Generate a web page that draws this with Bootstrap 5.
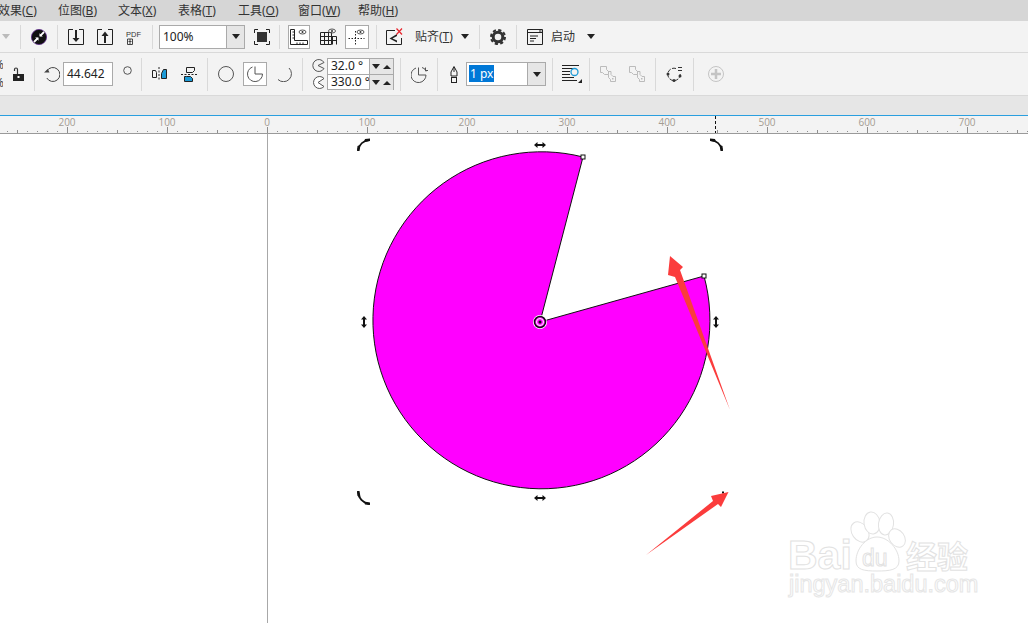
<!DOCTYPE html>
<html lang="zh-CN">
<head>
    <meta charset="UTF-8">
    <meta name="viewport" content="width=device-width, initial-scale=1.0">
    <title>CorelDRAW</title>
    <link href="https://cdn.jsdelivr.net/npm/bootstrap@5.3.3/dist/css/bootstrap.min.css" rel="stylesheet">
    <script src="https://cdn.jsdelivr.net/npm/bootstrap@5.3.3/dist/js/bootstrap.bundle.min.js"></script>
    <style>
        html, body { height: 100%; overflow: hidden; background: #fff; }
        body { font-family: "Noto Sans", "Noto Sans CJK SC", sans-serif; font-size: 12px; color: #333; }
        svg { display: block; flex: none; }

        .menu-bar { height: 21px; background: #d6d6d6; overflow: hidden; }
        .menu-bar span { flex: none; width: 60px; white-space: nowrap; line-height: 21px; }
        .menu-bar span:first-child { margin-left: -2px; }
        .menu-bar u { text-underline-offset: 1px; }

        .tool-row { background: #f3f3f3; border-bottom: 1px solid #d9d9d9; }
        .row-one { height: 32px; }
        .row-two { height: 43px; }
        .band { height: 20px; background: #e6e6e6; border-bottom: 1px solid #2a9fdf; }
        .sep { flex: none; width: 1px; background: #d9d9d9; }
        .row-one .sep { height: 24px; }
        .row-two .sep { height: 33px; }
        .caret-down { flex: none; width: 0; height: 0; border: 4px solid transparent; border-top: 5px solid #222; border-bottom: 0; }
        .caret-off { border-top-color: #bbb; }
        .caret-up { flex: none; width: 0; height: 0; border: 4px solid transparent; border-bottom: 4px solid #222; border-top: 0; }
        .tool-label { flex: none; white-space: nowrap; line-height: 16px; }
        .toggled { flex: none; height: 24px; background: #fff; border: 1px solid #aaa; }

        .field { flex: none; height: 24px; background: #fff; border: 1px solid #aaa; color: #222; }
        .field-text { flex: 1; padding-left: 3px; line-height: 22px; white-space: nowrap; }
        .field-btn { flex: none; width: 18px; background: #e6e6e6; border-left: 1px solid #aaa; }
        .w-zoom { width: 86px; }
        .w-angle { width: 50px; }
        .w-pen { width: 80px; }
        .w-toggle-a { width: 22px; }
        .w-toggle-b { width: 24px; }
        .selected-text { background: #0078d7; color: #fff; padding: 0 1px; margin-left: -1px; }

        .spin-box { flex: none; width: 67px; height: 32px; background: #fff; border: 1px solid #aaa; color: #222; }
        .spin-row { height: 15px; }
        .spin-row + .spin-row { border-top: 1px solid #aaa; height: 16px; }
        .spin-val { width: 41px; padding-left: 3px; line-height: 14px; white-space: nowrap; }
        .spin-btns { flex: 1; background: #e6e6e6; border-left: 1px solid #aaa; }
        .pct { flex: none; width: 3px; overflow: hidden; line-height: 18px; color: #444; }
        .pct span { display: block; margin-left: -6px; }

        .l2 { margin-left: 2px; } .l3 { margin-left: 3px; } .l6 { margin-left: 6px; }
        .l7 { margin-left: 7px; } .l8 { margin-left: 8px; } .l9 { margin-left: 9px; }
        .l10 { margin-left: 10px; } .l11 { margin-left: 11px; } .l12 { margin-left: 12px; }
        .l13 { margin-left: 13px; } .l14 { margin-left: 14px; }

        .ruler { height: 18px; background: #f3f3f3; }
        .ruler text { font-family: "Open Sans", sans-serif; font-size: 10px; fill: #a39c92; text-anchor: middle; }
        .canvas-area { flex: 1; min-height: 0; }
        .wm-big { font-family: "Liberation Sans", sans-serif; font-weight: 700; font-size: 41px; fill: #fff; stroke: #e2e2e2; stroke-width: 1; }
        .wm-du { font-family: "Liberation Sans", sans-serif; font-size: 23px; fill: #fff; stroke: #e2e2e2; stroke-width: 1; }
        .wm-cn { font-family: "Noto Sans CJK SC", sans-serif; font-weight: 700; font-size: 31px; fill: #fff; stroke: #e2e2e2; stroke-width: 1; }
        .wm-url { font-family: "Liberation Sans", sans-serif; font-size: 23.5px; fill: #fff; stroke: #e6e6e6; stroke-width: 1; }
    </style>
</head>
<body>
<div class="d-flex flex-column vh-100">

    <!-- menu -->
    <nav class="menu-bar d-flex">
        <span>效果(<u>C</u>)</span>
        <span>位图(<u>B</u>)</span>
        <span>文本(<u>X</u>)</span>
        <span>表格(<u>T</u>)</span>
        <span>工具(<u>O</u>)</span>
        <span>窗口(<u>W</u>)</span>
        <span>帮助(<u>H</u>)</span>
    </nav>

    <!-- standard toolbar -->
    <div class="tool-row row-one d-flex align-items-center">
        <div class="caret-down caret-off l2"></div>
        <div class="sep l10"></div>
        <svg class="l10" width="16" height="16" viewBox="0 0 16 16"><circle cx="8" cy="8" r="7.6" fill="#111" stroke="#5b2a86" stroke-width=".8"/><path d="M13 3 9.2 6.8M3 13l3.800-3.800" stroke="#fff" stroke-width="1.800"/><path d="M6 6h4v4z M10 10H6V6z" fill="none"/><path d="M8.500 4.200V7.500H11.800zM7.500 11.800V8.500H4.200z" fill="#fff"/></svg>
        <div class="sep l10"></div>
        <svg class="l10" width="16" height="16" viewBox="0 0 16 16" fill="none" stroke="#222"><path d="M5 .5H.5v15h15V.5H11"/><path d="M8 1v9" stroke-width="2"/><path d="M4.500 9h7L8 13z" fill="#222" stroke="none"/></svg>
        <svg class="l13" width="16" height="16" viewBox="0 0 16 16" fill="none" stroke="#222"><path d="M5 .5H.5v15h15V.5H11"/><path d="M8 6v8" stroke-width="2"/><path d="M4.500 7h7L8 2.500z" fill="#222" stroke="none"/></svg>
        <svg class="l13" width="16" height="16" viewBox="0 0 16 16"><text x="0" y="7.500" font-family="Liberation Sans, sans-serif" font-size="7.500" fill="#333">PDF</text><path d="M1.500 10h5v5.500h-5zM2.500 12.500h3M4 10v5.500" fill="none" stroke="#444"/></svg>
        <div class="sep l10"></div>
        <div class="field w-zoom d-flex l6">
            <div class="field-text">100%</div>
            <div class="field-btn d-flex align-items-center justify-content-center"><div class="caret-down"></div></div>
        </div>
        <svg class="l9" width="16" height="16" viewBox="0 0 16 16" fill="none" stroke="#222"><path d="M.5 4V.5H4M12 .5h3.500V4M15.500 12v3.500H12M4 15.500H.5V12"/><rect x="3" y="3" width="10" height="10" fill="#333" stroke="none"/></svg>
        <div class="sep l9"></div>
        <div class="toggled w-toggle-a d-flex align-items-center justify-content-center l8">
            <svg width="18" height="18" viewBox="0 0 18 18" fill="none" stroke="#222"><path d="M.5 1.500h4v11h13v4H.5z"/><path d="M2.500 4h2M2.500 7h2M2.500 10h2M7 14.500v2M10 14.500v2M13 14.500v2"/><ellipse cx="12.500" cy="4" rx="3.500" ry="2" stroke="#555"/><circle cx="12.500" cy="4" r="1" fill="#333" stroke="none"/></svg>
        </div>
        <svg class="l10" width="17" height="17" viewBox="0 0 17 17" fill="none" stroke="#222"><path d="M.5 4.500h11v12H.5zM.5 8.500h16M.5 12.500h16M4.500 4.500v12M8.500 4.500v12M12.500 8.500v8M16.500 8.500v8"/><ellipse cx="12" cy="3" rx="3.500" ry="2" stroke="#555"/><circle cx="12" cy="3" r="1" fill="#333" stroke="none"/></svg>
        <div class="toggled w-toggle-b d-flex align-items-center justify-content-center l8">
            <svg width="18" height="18" viewBox="0 0 18 18" fill="none" stroke="#222"><path d="M7.500 3v14M.5 10.500h16" stroke-dasharray="1.500 1.500"/><ellipse cx="12.500" cy="4" rx="3.500" ry="2" stroke="#555"/><circle cx="12.500" cy="4" r="1" fill="#333" stroke="none"/></svg>
        </div>
        <div class="sep l7"></div>
        <svg class="l9" width="17" height="17" viewBox="0 0 17 17" fill="none"><path d="M9 2.500H.5v14h15V10" stroke="#222"/><path d="M11 6v8.500L3.500 10.500z" fill="#222"/><path d="M6.500 10.500 11 8v4.500z" fill="#f3f3f3"/><path d="M10.500.5l5.500 6M16 .5l-5.500 6" stroke="#e8242c" stroke-width="1.200"/></svg>
        <div class="tool-label l12">贴齐(<u>T</u>)</div>
        <div class="caret-down l8"></div>
        <div class="sep l10"></div>
        <svg class="l10" width="16" height="16" viewBox="0 0 16 16" fill="none" stroke="#333"><circle cx="8" cy="8" r="4.800" stroke-width="3"/><circle cx="8" cy="8" r="7" stroke-width="2" stroke-dasharray="3.200 2.300"/></svg>
        <div class="sep l10"></div>
        <svg class="l10" width="16" height="16" viewBox="0 0 16 16" fill="none" stroke="#222"><path d="M.5 .5h15v15H.5zM.5 3.500h15" /><path d="M12 2h2.500" /><path d="M3 7h8M3 9.500h6M3 12h4"/></svg>
        <div class="tool-label l8">启动</div>
        <div class="caret-down l12"></div>
    </div>

    <!-- property bar -->
    <div class="tool-row row-two d-flex align-items-center">
        <div class="pct"><span>%</span><span>%</span></div>
        <svg class="l10" width="11" height="14" viewBox="0 0 11 14" fill="none"><path d="M1.500 4V2.500A1.500 1.500 0 0 1 4.500 2.500V7" stroke="#333" stroke-width="1.200"/><rect y="7" width="11" height="7" fill="#222"/><rect x="4.500" y="9" width="2" height="2" fill="#fff"/></svg>
        <div class="sep l10"></div>
        <svg class="l9" width="16" height="16" viewBox="0 0 16 16" fill="none" stroke="#444"><path d="M2.800 5A7 7 0 1 1 2.800 12"/><path d="M0 6.500h5.500L3.800 3z" fill="#444" stroke="none"/></svg>
        <div class="field w-angle d-flex l3"><div class="field-text">44.642</div></div>
        <svg class="l10 mb-2" width="9" height="9" viewBox="0 0 9 9"><circle cx="4.500" cy="4.500" r="3.800" fill="none" stroke="#555"/></svg>
        <div class="sep l9"></div>
        <svg class="l10" width="15" height="14" viewBox="0 0 15 14" fill="none" stroke="#222"><path d="M.5 3.500h3l1 2v5h-4z"/><path d="M11.500 2.500h3v9h-5v-5z" fill="#1c9ad6"/><path d="M7 0v14" stroke-dasharray="2 1.500"/></svg>
        <svg class="l14" width="16" height="15" viewBox="0 0 16 15" fill="none" stroke="#222"><path d="M5.500 .5h8v3l-2 2h-6z"/><path d="M5.500 9.500h4l2 2v3h-8v-5z" fill="#1c9ad6"/><path d="M0 7.500h16" stroke-dasharray="2 1.500"/></svg>
        <div class="sep l10"></div>
        <svg class="l10" width="16" height="16" viewBox="0 0 16 16"><circle cx="8" cy="8" r="7.500" fill="none" stroke="#555"/></svg>
        <div class="toggled w-toggle-b d-flex align-items-center justify-content-center l9">
            <svg width="18" height="18" viewBox="0 0 18 18"><path d="M9 1.500V9h7.500A7.500 7.500 0 1 1 6.500 2" fill="none" stroke="#555"/></svg>
        </div>
        <svg class="l9" width="16" height="16" viewBox="0 0 16 16"><path d="M13 2A7.500 7.500 0 1 1 2 13.500" fill="none" stroke="#555"/></svg>
        <div class="sep l10"></div>
        <div class="l8 d-flex flex-column gap-1">
            <svg width="14" height="13" viewBox="0 0 14 13"><path d="M13 3.500A6 6 0 1 0 13 9.500L7 6.500z" fill="none" stroke="#555"/></svg>
            <svg width="14" height="13" viewBox="0 0 14 13"><path d="M13 2.500A6 6 0 1 0 13 10.500L7 6.500z" fill="#fff" stroke="#555"/></svg>
        </div>
        <div class="spin-box l2">
            <div class="spin-row d-flex">
                <div class="spin-val">32.0 °</div>
                <div class="spin-btns d-flex align-items-center justify-content-around"><div class="caret-down"></div><div class="caret-up"></div></div>
            </div>
            <div class="spin-row d-flex">
                <div class="spin-val">330.0 °</div>
                <div class="spin-btns d-flex align-items-center justify-content-around"><div class="caret-down"></div><div class="caret-up"></div></div>
            </div>
        </div>
        <div class="sep l6"></div>
        <svg class="l10" width="17" height="17" viewBox="0 0 17 17" fill="none" stroke="#555"><path d="M7.500 1.500V9H15A7.500 7.500 0 1 1 5 2"/><path d="M11 1.500a5 5 0 0 1 4 4"/><path d="M14.500 1.500v3h3" stroke-width="1"/></svg>
        <div class="sep l9"></div>
        <svg class="l12" width="8" height="17" viewBox="0 0 8 17" fill="none" stroke="#222"><path d="M4 .5 7 6v4H1V6zM4 1v5"/><rect x="1.500" y="11.500" width="5" height="5"/></svg>
        <div class="field w-pen d-flex l8">
            <div class="field-text"><span class="selected-text">1 px</span></div>
            <div class="field-btn d-flex align-items-center justify-content-center"><div class="caret-down"></div></div>
        </div>
        <div class="sep l6"></div>
        <svg class="l9" width="20" height="18" viewBox="0 0 20 18" fill="none"><path d="M0 .5h17M0 3.500h11M0 6.500h8M0 9.500h8M0 12.500h12M0 15.500h15" stroke="#222"/><circle cx="12.500" cy="7" r="3.500" stroke="#1c9ad6" stroke-width="1.300"/><path d="M20 14v4h-4z" fill="#222"/></svg>
        <div class="sep l7"></div>
        <svg class="l10" width="16" height="16" viewBox="0 0 16 16" fill="none" stroke="#bbb"><path d="M.5 .5h6v3l2 2v3h-4l-2-2h-2zM8 5.500h3v3l2 2h2.500v5h-5v-2l-2-2V8.500"/><rect x="12" y="12" width="1.500" height="1.500" fill="#bbb" stroke="none"/></svg>
        <svg class="l13" width="16" height="16" viewBox="0 0 16 16" fill="none" stroke="#bbb"><path d="M.5 .5h6v3l2 2v3h-4l-2-2h-2zM8 5.500h3v3l2 2h2.500v5h-5v-2l-2-2V8.500"/><rect x="12" y="12" width="1.500" height="1.500" fill="#bbb" stroke="none"/></svg>
        <div class="sep l10"></div>
        <svg class="l10" width="16" height="16" viewBox="0 0 16 16" fill="none"><path d="M10 2.500A6.200 6.200 0 1 0 14.200 8" stroke="#333" stroke-dasharray="4 1.500"/><path d="M12 1.500h4M12 4.500h4" stroke="#333"/><circle cx="2" cy="8" r="1.500" fill="#333"/><circle cx="8" cy="14.500" r="1.500" fill="#333"/><circle cx="14" cy="10" r="1.500" fill="#333"/></svg>
        <div class="sep l11"></div>
        <svg class="l14" width="16" height="16" viewBox="0 0 16 16" fill="none" stroke="#c4c4c4"><circle cx="8" cy="8" r="7.500"/><path d="M8 3v10M3 8h10" stroke-width="2.500"/></svg>
    </div>

    <div class="band"></div>

    <!-- ruler, same coordinates as the screen -->
    <svg class="ruler w-100" width="1028" height="18" viewBox="0 116 1028 18">
        <defs>
            <pattern id="ticks" x="67" y="116" width="100" height="18" patternUnits="userSpaceOnUse">
                <path d="M0.500 11v6M50.500 14v3M10.500 15v1M20.500 15v1M30.500 15v1M40.500 15v1M60.500 15v1M70.500 15v1M80.500 15v1M90.500 15v1" stroke="#8e8e8e" fill="none"/>
            </pattern>
        </defs>
        <rect x="0" y="116" width="1028" height="17" fill="url(#ticks)"/>
        <rect x="0" y="133" width="1028" height="1" fill="#9a9a9a"/>
        <text x="67" y="126">200</text>
        <text x="167" y="126">100</text>
        <text x="267" y="126">0</text>
        <text x="367" y="126">100</text>
        <text x="467" y="126">200</text>
        <text x="567" y="126">300</text>
        <text x="667" y="126">400</text>
        <text x="767" y="126">500</text>
        <text x="867" y="126">600</text>
        <text x="967" y="126">700</text>
        <path d="M715.500 116v17" stroke="#111" stroke-dasharray="3 2"/>
    </svg>

    <!-- drawing canvas -->
    <div class="canvas-area">
        <svg width="1028" height="489" viewBox="0 134 1028 489">
            <path d="M267.500 134V623" stroke="#a8a8a8"/>

            <!-- pie -->
            <path d="M540 322 583 157A168.500 168.500 0 1 0 704 276Z" fill="#ff00ff" stroke="#111" stroke-width="1"/>
            <rect x="581" y="155" width="4" height="4" fill="#fff" stroke="#111"/>
            <rect x="702" y="274" width="4" height="4" fill="#fff" stroke="#111"/>
            <circle cx="540" cy="322" r="7" fill="#fff"/>
            <circle cx="540" cy="322" r="5.500" fill="#ff00ff" stroke="#111" stroke-width="1.500"/>
            <circle cx="540" cy="322" r="3.500" fill="#ff00ff" stroke="#fff" stroke-width="1"/>
            <circle cx="540" cy="322" r="1.500" fill="#111"/>

            <!-- rotate and skew handles -->
            <g fill="none" stroke="#111" stroke-width="1.800">
                <path d="M358 150A13 13 0 0 1 369 140M357 139" />
                <path d="M722 150A13 13 0 0 0 711 140"/>
                <path d="M358 492A13 13 0 0 0 369 504"/>
            </g>
            <g fill="#111">
                <path d="M357 151h2.500l1-6-3 1zM370 138.500v2.500l-6 1 1-3z"/>
                <path d="M723 151h-2.500l-1-6 3 1zM710 138.500v2.500l6 1-1-3z"/>
                <path d="M357 491h2.500l1 6-3-1zM370 505v-2.500l-6-1 1 3z"/>
                <path d="M722 491.500h2v2h-2z"/>
                <path d="M534 145l3.500-3v2h5v-2l3.500 3-3.500 3v-2h-5v2z"/>
                <path d="M534 498l3.500-3v2h5v-2l3.500 3-3.500 3v-2h-5v2z"/>
                <path d="M364 316l3 3.500h-2v5h2l-3 3.500-3-3.500h2v-5h-2z"/>
                <path d="M716 316l3 3.500h-2v5h2l-3 3.500-3-3.500h2v-5h-2z"/>
            </g>

            <!-- red arrows pasted on the screenshot -->
            <path d="M670 256 683 267 680 270 730 410 675 277 668 275Z" fill="#fb3c3c"/>
            <path d="M728.500 492 721 507 718 504 646 555 713 501 711 496Z" fill="#fb3c3c"/>

            <!-- watermark -->
            <g fill="#fff" stroke="#e2e2e2">
                <ellipse cx="860" cy="532" rx="8" ry="11" transform="rotate(-35 860 532)"/>
                <ellipse cx="872" cy="523" rx="8" ry="11" transform="rotate(-8 872 523)"/>
                <ellipse cx="886" cy="524" rx="7.500" ry="11" transform="rotate(8 886 524)"/>
                <ellipse cx="897" cy="538" rx="7.500" ry="10" transform="rotate(-35 897 538)"/>
                <path d="M877 537C866 537 856 549 856 561C856 570 864 571 877 571C890 571 899 570 899 561C899 549 888 537 877 537Z"/>
            </g>
            <text class="wm-big" x="788" y="569">Bai</text>
            <text class="wm-du" x="862" y="566">du</text>
            <text class="wm-cn" x="906" y="568">经验</text>
            <text class="wm-url" x="789" y="592">jingyan.baidu.com</text>
        </svg>
    </div>
</div>
</body>
</html>
